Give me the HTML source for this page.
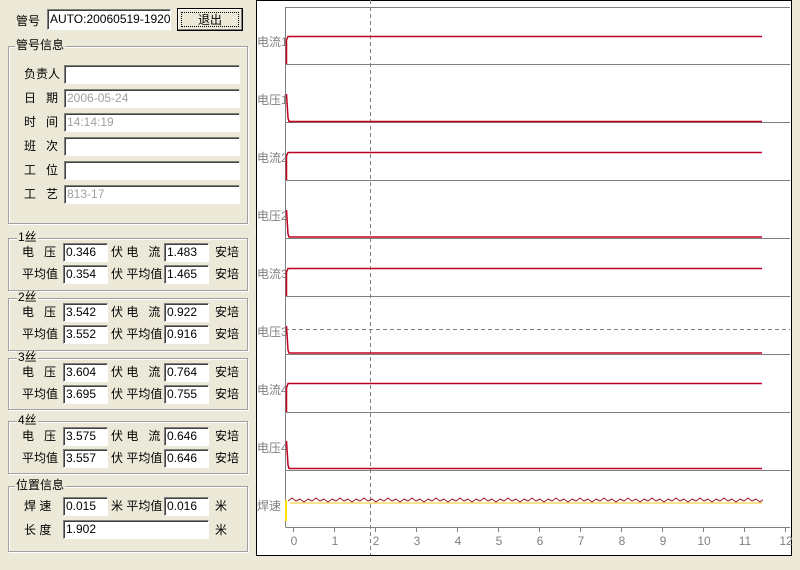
<!DOCTYPE html>
<html><head><meta charset="utf-8"><style>
body{margin:0;width:800px;height:570px;background:#ece9d8;position:relative;overflow:hidden;font-family:"Liberation Sans","Noto Sans CJK SC",sans-serif;font-size:12px;color:#000}
.a{position:absolute;white-space:nowrap;line-height:14px}
.i{position:absolute;background:#fff;box-sizing:border-box;border-top:1px solid #808080;border-left:1px solid #808080;border-bottom:1px solid #fff;border-right:1px solid #fff;box-shadow:inset 1px 1px 0 #404040;font-size:12px;line-height:17px;padding-left:2px;height:19px;overflow:hidden;white-space:nowrap}
.g{color:#a0a0a0}
.gb{position:absolute;border:1px solid #a0a0a0;box-shadow:1px 1px 0 #fff inset,1px 1px 0 #fff}
.gl{position:absolute;background:#ece9d8;padding:0 1px;line-height:13px}
</style></head><body>
<div class="a" style="left:16px;top:14px">管号</div>
<div class="i" style="left:47px;top:9px;width:124px;height:21px;line-height:19px">AUTO:20060519-19202?</div>
<div style="position:absolute;left:177px;top:8px;width:66px;height:23px;box-sizing:border-box;border:1px solid #000;background:#ece9d8;box-shadow:inset -1px -1px 0 #808080,inset 1px 1px 0 #fff"><div style="position:absolute;left:3px;top:3px;right:3px;bottom:3px;border:1px dotted #000;text-align:center;line-height:14px">退出</div></div>

<div class="gb" style="left:8px;top:46px;width:238px;height:176px"></div>
<div class="gl" style="left:15px;top:39px">管号信息</div>
<div class="a" style="left:24px;top:67px">负责人</div><div class="i" style="left:64px;top:65px;width:176px;height:19px"></div>
<div class="a" style="left:24px;top:91px">日&nbsp;&nbsp;&nbsp;期</div><div class="i g" style="left:64px;top:89px;width:176px;height:19px">2006-05-24</div>
<div class="a" style="left:24px;top:115px">时&nbsp;&nbsp;&nbsp;间</div><div class="i g" style="left:64px;top:113px;width:176px;height:19px">14:14:19</div>
<div class="a" style="left:24px;top:139px">班&nbsp;&nbsp;&nbsp;次</div><div class="i" style="left:64px;top:137px;width:176px;height:19px"></div>
<div class="a" style="left:24px;top:163px">工&nbsp;&nbsp;&nbsp;位</div><div class="i" style="left:64px;top:161px;width:176px;height:19px"></div>
<div class="a" style="left:24px;top:187px">工&nbsp;&nbsp;&nbsp;艺</div><div class="i g" style="left:64px;top:185px;width:176px;height:19px">813-17</div>

<div class="gb" style="left:8px;top:238px;width:238px;height:51px"></div><div class="gl" style="left:17px;top:231px">1丝</div>
<div class="a" style="left:22px;top:245px">电&nbsp;&nbsp;&nbsp;压</div><div class="i" style="left:63px;top:243px;width:45px">0.346</div><div class="a" style="left:111px;top:245px">伏 电&nbsp;&nbsp;&nbsp;流</div><div class="i" style="left:164px;top:243px;width:45px">1.483</div><div class="a" style="left:215px;top:245px">安培</div>
<div class="a" style="left:22px;top:267px">平均值</div><div class="i" style="left:63px;top:265px;width:45px">0.354</div><div class="a" style="left:111px;top:267px">伏 平均值</div><div class="i" style="left:164px;top:265px;width:45px">1.465</div><div class="a" style="left:215px;top:267px">安培</div>

<div class="gb" style="left:8px;top:298px;width:238px;height:51px"></div><div class="gl" style="left:17px;top:291px">2丝</div>
<div class="a" style="left:22px;top:305px">电&nbsp;&nbsp;&nbsp;压</div><div class="i" style="left:63px;top:303px;width:45px">3.542</div><div class="a" style="left:111px;top:305px">伏 电&nbsp;&nbsp;&nbsp;流</div><div class="i" style="left:164px;top:303px;width:45px">0.922</div><div class="a" style="left:215px;top:305px">安培</div>
<div class="a" style="left:22px;top:327px">平均值</div><div class="i" style="left:63px;top:325px;width:45px">3.552</div><div class="a" style="left:111px;top:327px">伏 平均值</div><div class="i" style="left:164px;top:325px;width:45px">0.916</div><div class="a" style="left:215px;top:327px">安培</div>

<div class="gb" style="left:8px;top:358px;width:238px;height:50px"></div><div class="gl" style="left:17px;top:351px">3丝</div>
<div class="a" style="left:22px;top:365px">电&nbsp;&nbsp;&nbsp;压</div><div class="i" style="left:63px;top:363px;width:45px">3.604</div><div class="a" style="left:111px;top:365px">伏 电&nbsp;&nbsp;&nbsp;流</div><div class="i" style="left:164px;top:363px;width:45px">0.764</div><div class="a" style="left:215px;top:365px">安培</div>
<div class="a" style="left:22px;top:387px">平均值</div><div class="i" style="left:63px;top:385px;width:45px">3.695</div><div class="a" style="left:111px;top:387px">伏 平均值</div><div class="i" style="left:164px;top:385px;width:45px">0.755</div><div class="a" style="left:215px;top:387px">安培</div>

<div class="gb" style="left:8px;top:421px;width:238px;height:51px"></div><div class="gl" style="left:17px;top:414px">4丝</div>
<div class="a" style="left:22px;top:429px">电&nbsp;&nbsp;&nbsp;压</div><div class="i" style="left:63px;top:427px;width:45px">3.575</div><div class="a" style="left:111px;top:429px">伏 电&nbsp;&nbsp;&nbsp;流</div><div class="i" style="left:164px;top:427px;width:45px">0.646</div><div class="a" style="left:215px;top:429px">安培</div>
<div class="a" style="left:22px;top:451px">平均值</div><div class="i" style="left:63px;top:449px;width:45px">3.557</div><div class="a" style="left:111px;top:451px">伏 平均值</div><div class="i" style="left:164px;top:449px;width:45px">0.646</div><div class="a" style="left:215px;top:451px">安培</div>

<div class="gb" style="left:8px;top:486px;width:238px;height:64px"></div><div class="gl" style="left:15px;top:479px">位置信息</div>
<div class="a" style="left:24px;top:499px">焊&nbsp;速</div><div class="i" style="left:63px;top:497px;width:45px">0.015</div><div class="a" style="left:111px;top:499px">米 平均值</div><div class="i" style="left:164px;top:497px;width:45px">0.016</div><div class="a" style="left:215px;top:499px">米</div>
<div class="a" style="left:24px;top:523px">长&nbsp;度</div><div class="i" style="left:63px;top:520px;width:146px">1.902</div><div class="a" style="left:215px;top:523px">米</div>

<svg style="position:absolute;left:0;top:0" width="800" height="570" font-family="Liberation Sans,Noto Sans CJK SC,sans-serif" font-size="12">
<defs><clipPath id="c"><rect x="286" y="480" width="477" height="40"/></clipPath></defs>
<rect x="256.5" y="0.5" width="535" height="555" fill="#fff" stroke="#000"/>
<g stroke="#808080" stroke-width="1" fill="none">
<path d="M285.5 7.5H790M285.5 64.5H790M285.5 122.5H790M285.5 180.5H790M285.5 238.5H790M285.5 296.5H790M285.5 354.5H790M285.5 412.5H790M285.5 470.5H790M285.5 527.5H790M285.5 7V527"/>
<path d="M293.5 527v5M334.5 527v5M375.5 527v5M416.5 527v5M457.5 527v5M498.5 527v5M539.5 527v5M580.5 527v5M621.5 527v5M662.5 527v5M703.5 527v5M744.5 527v5M785.5 527v5"/>
<path d="M370.5 0V555M285 329.5H790" stroke-dasharray="4 3"/>
</g>
<g fill="#808080">
<text x="257" y="46">电流1</text><text x="257" y="104">电压1</text><text x="257" y="162">电流2</text><text x="257" y="220">电压2</text>
<text x="257" y="278">电流3</text><text x="257" y="336">电压3</text><text x="257" y="394">电流4</text><text x="257" y="452">电压4</text><text x="257" y="510">焊速</text>
<g text-anchor="middle"><text x="294" y="545">0</text><text x="335" y="545">1</text><text x="376" y="545">2</text><text x="417" y="545">3</text><text x="458" y="545">4</text><text x="499" y="545">5</text><text x="540" y="545">6</text><text x="581" y="545">7</text><text x="622" y="545">8</text><text x="663" y="545">9</text><text x="704" y="545">10</text><text x="745" y="545">11</text><text x="786" y="545">12</text></g>
</g>
<g stroke="#c00020" stroke-width="1.5" fill="none">
<path d="M286.5 64V40L288 36.5H762"/>
<path d="M286.5 94L288 118L289 121.5H762"/>
<path d="M286.5 180V156L288 152.5H762"/>
<path d="M286.5 210L288 234L289 237H762"/>
<path d="M286.5 296V272L288 268.5H762"/>
<path d="M286.5 326L288 350L289 353H762"/>
<path d="M286.5 412V388L288 383.5H762"/>
<path d="M286.5 441L288 465L289 468.5H762"/>
</g>
<path d="M286 521V500" stroke="#ffe000" stroke-width="2"/>
<g clip-path="url(#c)">
<path d="M290 503H762" stroke="#f0d040" stroke-width="2" opacity=".6"/>
<path d="M288 501l4-3 4 3 4-2 4 3 4-3 4 2 4-3 4 3 4-2 4 3 4-3 4 2 4-3 4 3 4-2 4 3 4-3 4 2 4-3 4 3 4-2 4 3 4-3 4 2 4-3 4 3 4-2 4 3 4-3 4 2 4-3 4 3 4-2 4 3 4-3 4 2 4-3 4 3 4-2 4 3 4-3 4 2 4-3 4 3 4-2 4 3 4-3 4 2 4-3 4 3 4-2 4 3 4-3 4 2 4-3 4 3 4-2 4 3 4-3 4 2 4-3 4 3 4-2 4 3 4-3 4 2 4-3 4 3 4-2 4 3 4-3 4 2 4-3 4 3 4-2 4 3 4-3 4 2 4-3 4 3 4-2 4 3 4-3 4 2 4-3 4 3 4-2 4 3 4-3 4 2 4-3 4 3 4-2 4 3 4-3 4 2 4-3 4 3 4-2 4 3 4-3 4 2 4-3 4 3 4-2 4 3 4-3 4 2 4-3 4 3 4-2 4 3 4-3 4 2 4-3 4 3 4-2 4 3 4-3 4 2 4-3 4 3 4-2 4 3 4-3 4 2 4-3 4 3 4-2 4 3" stroke="#a02020" stroke-width="1" fill="none"/>
</g>
</svg>
</body></html>
